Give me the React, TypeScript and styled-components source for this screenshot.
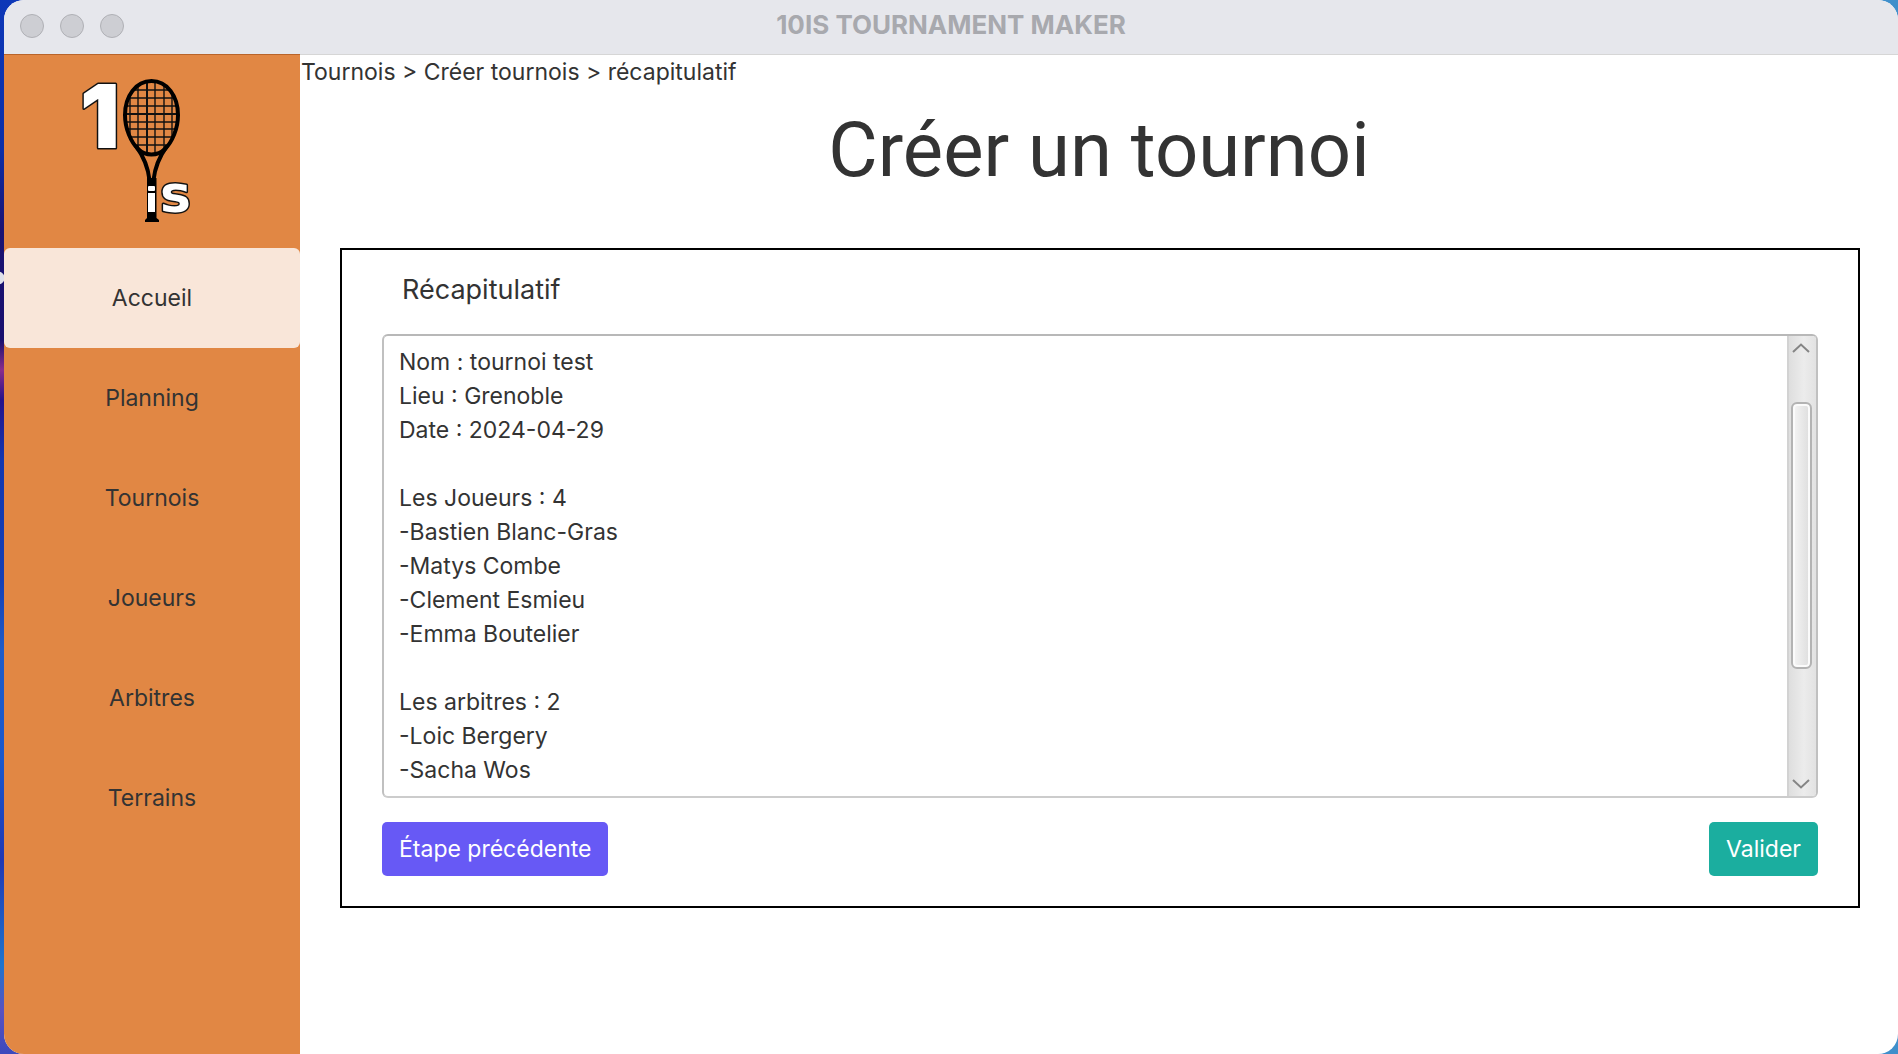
import React, { useState } from "react";
import styled, { createGlobalStyle } from "styled-components";

const GlobalStyle = createGlobalStyle`
  *, *::before, *::after { box-sizing: border-box; }
  html, body { margin: 0; height: 100%; }
  #root { height: 100%; }
  body {
    font-family: Inter, "Liberation Sans", sans-serif;
    color: #333333;
    background: #3f8fcb;
  }
  button, textarea { font: inherit; color: inherit; }
`;

const Desktop = styled.div`
  display: flex;
  min-height: 100%;
  padding-left: 4px;
  background:
    radial-gradient(circle at -2px 278px, #dfe0ea 0 6px, transparent 7px),
    linear-gradient(180deg, #0d38b8 0, #0b2fa8 150px, #1a1272 230px, #190f6e 340px,
      #8a2d8c 370px, #24128a 400px, #1238b0 460px, #1640b4 580px, #1f5cc8 650px, #1a58cc 760px, #2038b4 860px, #1f74cc 965px, #5a52c0 1010px, #3c49bd 100%)
      0 0 / 40px 100% no-repeat,
    #3f8fcb;
`;

const AppWindow = styled.div`
  flex: 1;
  display: flex;
  flex-direction: column;
  overflow: hidden;
  border-radius: 20px;
  background: #ffffff;
`;

const TitleBar = styled.header`
  display: grid;
  grid-template-columns: 1fr auto 1fr;
  align-items: center;
  height: 54px;
  padding: 0 16px 4px;
  background: #e6e7ec;
`;

const WindowControls = styled.div`
  display: flex;
  gap: 16px;
  padding-top: 2px;
`;

const WindowDot = styled.button`
  width: 24px;
  height: 24px;
  padding: 0;
  border: 1px solid #afb0b5;
  border-radius: 50%;
  background: #cdced3;
`;

const WindowTitle = styled.div`
  font-size: 26px;
  line-height: 32px;
  font-weight: 700;
  color: #a8a9ae;
`;

const Body = styled.div`
  flex: 1;
  display: flex;
`;

const Sidebar = styled.aside`
  flex: 0 0 296px;
  border-top: 1px solid #b9642a;
  background: #e18744;
`;

const LogoArea = styled.div`
  height: 193px;
  padding: 1px 0 0 62px;
`;

const LogoDrawing = styled.svg`
  display: block;
  width: 150px;
  height: 190px;
`;

const Nav = styled.nav`
  display: flex;
  flex-direction: column;
`;

const NavButton = styled.button<{ $active: boolean }>`
  height: 100px;
  padding: 0;
  border: 0;
  border-radius: 6px;
  background: ${(p) => (p.$active ? "#f9e6d9" : "transparent")};
  font-size: 23px;
  line-height: 34px;
  cursor: pointer;
`;

const Main = styled.main`
  flex: 1;
  min-width: 0;
  border-top: 1px solid #d6d6d6;
`;

const Breadcrumb = styled.div`
  font-size: 23px;
  line-height: 34px;
  padding-left: 1px;
`;

const PageTitle = styled.h1`
  margin: 0;
  padding: 10px 0 46px;
  font-family: Roboto, "Liberation Sans", sans-serif;
  font-size: 76px;
  line-height: 103px;
  font-weight: 400;
  text-align: center;
`;

const Panel = styled.section`
  margin: 0 38px 0 40px;
  padding: 18px 40px 30px;
  border: 2px solid #000000;
`;

const PanelLabel = styled.label`
  display: block;
  padding-left: 20px;
  font-size: 27px;
  line-height: 44px;
`;

const SummaryBox = styled.div`
  display: flex;
  height: 464px;
  margin: 22px 0 24px;
  overflow: hidden;
  border: 2px solid;
  border-color: #b8b8b8 #c0c0c0 #cccccc;
  border-radius: 6px;
`;

const SummaryText = styled.textarea`
  flex: 1;
  display: block;
  padding: 9px 15px;
  border: 0;
  outline: 0;
  resize: none;
  overflow: hidden;
  background: transparent;
  font-size: 23px;
  line-height: 34px;
`;

const ScrollTrack = styled.div`
  display: flex;
  flex-direction: column;
  align-items: center;
  width: 29px;
  padding-right: 3px;
  border-left: 2px solid #d2d2d2;
  background: linear-gradient(90deg, #dedede, #ececec 55%, #e2e2e2);
`;

const ArrowButton = styled.button`
  display: flex;
  justify-content: center;
  align-items: center;
  width: 24px;
  height: 24px;
  padding: 0;
  border: 0;
  background: transparent;
`;

const ScrollRail = styled.div`
  flex: 1;
  padding-top: 42px;
`;

const ScrollThumb = styled.div`
  width: 21px;
  height: 267px;
  border: 2px solid #b3b3b3;
  border-radius: 6px;
  background: linear-gradient(90deg, #f5f5f5, #dddddd);
  box-shadow: inset 0 0 0 2px #fbfbfb;
`;

const Actions = styled.div`
  display: flex;
  justify-content: space-between;
`;

const ActionButton = styled.button<{ $color: string }>`
  height: 54px;
  padding: 0 17px;
  border: 0;
  border-radius: 5px;
  background: ${(p) => p.$color};
  color: #ffffff;
  font-size: 23px;
  line-height: 34px;
  cursor: pointer;
`;

const SECTIONS = ["Accueil", "Planning", "Tournois", "Joueurs", "Arbitres", "Terrains"];

const SUMMARY = [
  "Nom : tournoi test",
  "Lieu : Grenoble",
  "Date : 2024-04-29",
  "",
  "Les Joueurs : 4",
  "-Bastien Blanc-Gras",
  "-Matys Combe",
  "-Clement Esmieu",
  "-Emma Boutelier",
  "",
  "Les arbitres : 2",
  "-Loic Bergery",
  "-Sacha Wos",
].join("\n");

function Logo() {
  const columns = [130, 138, 147, 155, 164, 172];
  const rows = [90, 98, 106, 114, 122, 129, 137, 145];
  return (
    <LogoDrawing viewBox="66 56 150 190" role="img" aria-label="10is">
      <defs>
        <clipPath id="head">
          <ellipse cx="151.5" cy="117" rx="26" ry="36" />
        </clipPath>
      </defs>
      <g fill="#fff" stroke="#111" strokeWidth="3" strokeLinejoin="round" paintOrder="stroke">
        <text x="80" y="148" fontFamily="Inter, sans-serif" fontWeight="900" fontSize="88">1</text>
        <text x="160" y="212" fontFamily="'DejaVu Sans', sans-serif" fontWeight="700" fontSize="52">s</text>
      </g>
      <g clipPath="url(#head)" stroke="#111" strokeWidth="1.4">
        {columns.map((x) => <path key={x} d={`M${x} 78V158`} />)}
        {rows.map((y) => <path key={y} d={`M122 ${y}H181`} />)}
        <path d="M147 78V158M122 114H181" strokeWidth="2" />
      </g>
      <g fill="none" stroke="#000" strokeWidth="4">
        <path d="M151.5 81C136 81 125 96 125 115C125 129 131 142 138 149C142 153 146 154.5 151.5 154.5C157 154.5 161 153 165 149C172 142 178 129 178 115C178 96 167 81 151.5 81Z" />
        <path d="M136 146C144 157 148 167 149.5 180M167 146C159 157 155 167 153.5 180" />
      </g>
      <path d="M147 178H156.5V218L159 220V222H145V220L147 218Z" fill="#000" />
      <rect x="148" y="186" width="7" height="5" rx="1" fill="#fff" />
      <rect x="148" y="193" width="7" height="19" fill="#fff" />
    </LogoDrawing>
  );
}

function Chevron({ up }: { up?: boolean }) {
  return (
    <svg width="18" height="10" viewBox="0 0 18 10" fill="none" stroke="#858585" strokeWidth="2">
      <path d={up ? "M1 9L9 1.5L17 9" : "M1 1L9 8.5L17 1"} />
    </svg>
  );
}

export default function App() {
  const [section, setSection] = useState("Accueil");
  return (
    <>
      <GlobalStyle />
      <Desktop>
        <AppWindow>
          <TitleBar>
            <WindowControls>
              <WindowDot aria-label="Fermer" />
              <WindowDot aria-label="Réduire" />
              <WindowDot aria-label="Agrandir" />
            </WindowControls>
            <WindowTitle>10IS TOURNAMENT MAKER</WindowTitle>
          </TitleBar>
          <Body>
            <Sidebar>
              <LogoArea>
                <Logo />
              </LogoArea>
              <Nav>
                {SECTIONS.map((name) => (
                  <NavButton key={name} $active={name === section} onClick={() => setSection(name)}>
                    {name}
                  </NavButton>
                ))}
              </Nav>
            </Sidebar>
            <Main>
              <Breadcrumb>Tournois &gt; Créer tournois &gt; récapitulatif</Breadcrumb>
              <PageTitle>Créer un tournoi</PageTitle>
              <Panel>
                <PanelLabel htmlFor="summary">Récapitulatif</PanelLabel>
                <SummaryBox>
                  <SummaryText id="summary" readOnly value={SUMMARY} />
                  <ScrollTrack>
                    <ArrowButton aria-label="Défiler vers le haut">
                      <Chevron up />
                    </ArrowButton>
                    <ScrollRail>
                      <ScrollThumb />
                    </ScrollRail>
                    <ArrowButton aria-label="Défiler vers le bas">
                      <Chevron />
                    </ArrowButton>
                  </ScrollTrack>
                </SummaryBox>
                <Actions>
                  <ActionButton $color="#6759f5">Étape précédente</ActionButton>
                  <ActionButton $color="#1bae9f">Valider</ActionButton>
                </Actions>
              </Panel>
            </Main>
          </Body>
        </AppWindow>
      </Desktop>
    </>
  );
}
